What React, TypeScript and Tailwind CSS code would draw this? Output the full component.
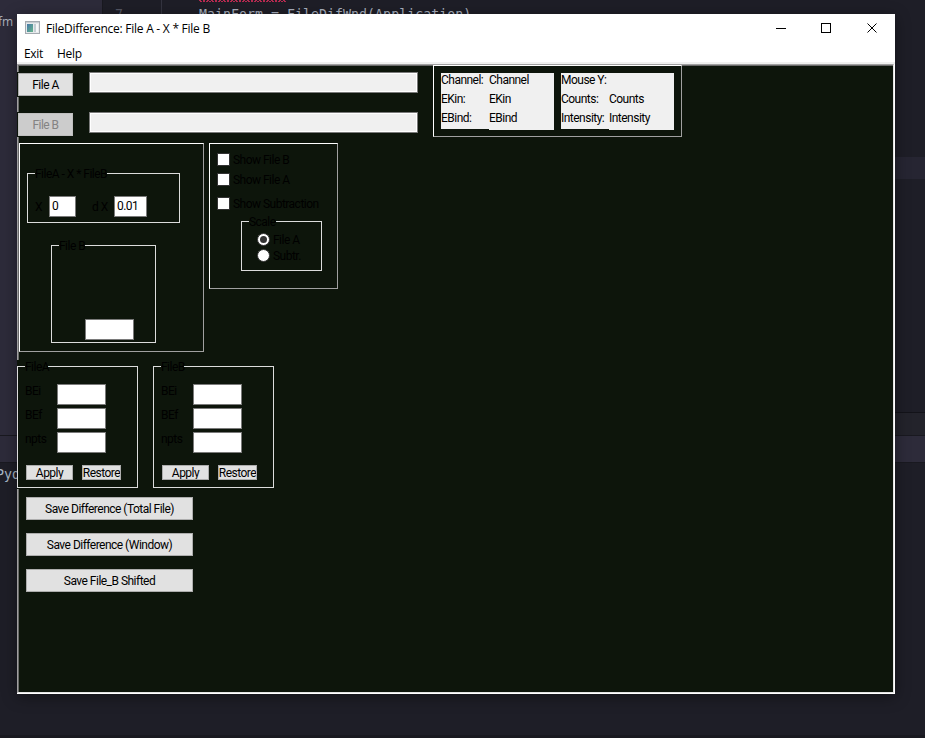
import type { ReactNode } from "react";

const TYPE = "font-['Roboto',sans-serif] text-[12px] leading-[14px] font-normal tracking-[-0.52px] whitespace-nowrap";
const INK = `${TYPE} text-black`;

function Field({ className = "", value = "" }: { className?: string; value?: string }) {
  return (
    <div className={`h-[21px] shrink-0 border border-[#7a7a7a] bg-white pl-[2px] pt-[2px] ${INK} ${className}`}>{value}</div>
  );
}

function PathBar() {
  return (
    <div className="h-[21px] w-[329px] border border-[#7a7a7a] bg-white p-px">
      <div className="h-full bg-[#f0f0f0]" />
    </div>
  );
}

function Button({ children, className = "", disabled = false }: { children: ReactNode; className?: string; disabled?: boolean }) {
  return (
    <button
      disabled={disabled}
      className={`flex shrink-0 items-center justify-center overflow-hidden border ${TYPE} ${disabled ? "border-[#bfbfbf] bg-[#cccccc] text-[#838383]" : "border-[#adadad] bg-[#e1e1e1] text-black"} ${className}`}
    >
      {children}
    </button>
  );
}

function Group({ title, titleClass, className, children }: { title: string; titleClass: string; className: string; children?: ReactNode }) {
  return (
    <div className={`relative shrink-0 border border-[#dcdcdc] ${className}`}>
      <div className={`absolute -top-[7px] left-[7px] bg-[#0d150b] ${INK} ${titleClass}`}>{title}</div>
      {children}
    </div>
  );
}

function Info({ labels, values }: { labels: string[]; values: string[] }) {
  return (
    <div className={`flex w-[113px] items-start ${INK}`}>
      <div className="flex h-[56px] w-[48px] flex-col gap-[5px] bg-[#f0f0f0]">
        {labels.map((t) => <div key={t} className="h-[14px]">{t}</div>)}
      </div>
      <div className="flex h-[57px] flex-1 flex-col gap-[5px] bg-[#f0f0f0]">
        {values.map((t, i) => <div key={i} className="h-[14px]">{t}</div>)}
      </div>
    </div>
  );
}

function Check({ label, className = "" }: { label: string; className?: string }) {
  return (
    <div className={`flex h-[13px] items-center gap-[3px] ${className}`}>
      <div className="size-[13px] shrink-0 border border-[#333333] bg-white" />
      <span className={INK}>{label}</span>
    </div>
  );
}

function Radio({ label, on = false }: { label: string; on?: boolean }) {
  return (
    <div className="flex h-[16px] items-center gap-[3px]">
      <div className="flex size-[13px] items-center justify-center rounded-full border border-[#333333] bg-white">
        {on && <div className="size-[7px] rounded-full bg-[#333333]" />}
      </div>
      <span className={`pt-px ${INK}`}>{label}</span>
    </div>
  );
}

function RangeGroup({ title, titleClass }: { title: string; titleClass: string }) {
  return (
    <Group title={title} titleClass={titleClass} className="h-[122px] w-[121px]">
      <div className="flex flex-col gap-[3px] pl-[7px] pt-[17px]">
        {["BEi", "BEf", "npts"].map((t) => (
          <div key={t} className="flex">
            <span className={`w-[32px] ${INK}`}>{t}</span>
            <Field className="w-[49px]" />
          </div>
        ))}
      </div>
      <div className="mt-[12px] flex gap-[9px] pl-[8px]">
        <Button className="h-[15px] w-[47px] pt-px">Apply</Button>
        <Button className="h-[15px] w-[39px] pt-px">Restore</Button>
      </div>
    </Group>
  );
}

function Editor() {
  return (
    <div className="flex h-full flex-col bg-[#1e1e27] font-['DejaVu_Sans_Mono',monospace] text-[13.3px] leading-[16px] text-[#a9b0bf]">
      <div className="flex h-[435px]">
        <div className="w-[102px] bg-[#2d2b3a] pt-[14px]">
          <div className="-ml-[2px] font-['Open_Sans',sans-serif] text-[12px] text-[#aeb2bd]">fm</div>
        </div>
        <div className="w-[60px] border-x border-[#191920] border-r-[#343440] pl-[12px] pt-[7px] text-[#555764]">7</div>
        <div className="flex flex-1 flex-col">
          <div className="h-[157px] pl-[37px]">
            <svg className="block" width="88" height="2" viewBox="0 0 88 2">
              <path d="M0 0.5H88" stroke="#b52b50" strokeDasharray="2 2" />
              <path d="M1 1.5H88" stroke="#b52b50" strokeDasharray="2 1" />
            </svg>
            <div className="mt-[5px] whitespace-nowrap">MainForm = FileDifWnd(Application)</div>
          </div>
          <div className="h-[22px] bg-[#262532]" />
          <div className="h-[233px]" />
          <div className="h-[23px] border-t border-[#131319] bg-[#23232b]" />
        </div>
      </div>
      <div className="h-[28px] border-y border-[#191920] bg-[#2d2b3a]" />
      <div className="flex-1 pt-[4px]">
        <div className="-ml-[4px] text-[#a9b7c6]">Pyd</div>
      </div>
      <div className="h-[3px] bg-[#191920]" />
    </div>
  );
}

export default function App() {
  return (
    <div className="relative h-[738px] w-[925px] overflow-hidden">
      <Editor />
      <div className="absolute left-[17px] top-[14px] flex h-[680px] w-[878px] flex-col bg-white shadow-[0_3px_14px_rgba(0,0,0,0.4)]">
        <div className="flex h-[29px] items-center font-['Open_Sans',sans-serif] text-[12px] text-black">
          <svg className="-mt-[2px] ml-[8px]" width="16" height="14" viewBox="0 0 16 14">
            <defs>
              <linearGradient id="screen" x1="0" y1="0" x2="1" y2="1">
                <stop offset="0" stopColor="#4778a8" />
                <stop offset="1" stopColor="#65b58b" />
              </linearGradient>
            </defs>
            <rect x="0.5" y="0.5" width="14" height="12" fill="#e6e9eb" stroke="#a4aab0" />
            <rect x="1" y="1" width="13" height="1" fill="#c8cdd2" />
            <rect x="2" y="3" width="6" height="8" fill="url(#screen)" />
            <rect x="9" y="3" width="2" height="8" fill="#c4ced4" />
            <rect x="11" y="3" width="2" height="8" fill="#f6f7f8" />
          </svg>
          <span className="ml-[5px] whitespace-nowrap tracking-[-0.25px]">FileDifference: File A - X * File B</span>
          <svg className="-mt-px ml-auto mr-[17px]" width="102" height="12" viewBox="0 0 102 12" fill="none" stroke="#000" shapeRendering="crispEdges">
            <path d="M0 6.5H10M45.5 1.5H54.5V10.5H45.5Z" />
            <path d="M91.5 1.5L100.5 10.5M100.5 1.5L91.5 10.5" shapeRendering="auto" />
          </svg>
        </div>
        <div className="flex h-[19px] items-center gap-[14px] pl-[7px] pt-[2px] font-['Open_Sans',sans-serif] text-[12px] tracking-[-0.3px] text-black">
          <span>Exit</span>
          <span>Help</span>
        </div>
        <div className="h-[2px] bg-[#f0f0f0]" />
        <div className="flex-1 border-b border-r border-white">
          <div className="h-full border border-b-[#e3e3e3] border-l-[#a0a0a0] border-r-[#e3e3e3] border-t-[#a0a0a0]">
            <div className="h-full border-l border-t border-[#696969] bg-[#0d150b]">
              <div className="flex h-[77px] items-start">
                <div className="-ml-[2px] flex flex-col gap-[15px] pt-[6px]">
                  <div className="bg-[#0d150b] py-px pl-px"><Button className="h-[23px] w-[55px] pt-px">File A</Button></div>
                  <div className="bg-[#0d150b] py-px pl-px"><Button disabled className="h-[23px] w-[55px] pt-px">File B</Button></div>
                </div>
                <div className="ml-[16px] flex flex-col gap-[19px] pt-[6px]">
                  <PathBar />
                  <PathBar />
                </div>
                <div className="-mt-px ml-[15px] flex h-[72px] w-[249px] gap-[7px] border border-b-[#a0a0a0] border-l-white border-r-[#a0a0a0] border-t-white pl-[7px] pt-[7px]">
                  <Info labels={["Channel:", "EKin:", "EBind:"]} values={["Channel", "EKin", "EBind"]} />
                  <Info labels={["Mouse Y:", "Counts:", "Intensity:"]} values={["", "Counts", "Intensity"]} />
                </div>
              </div>
              <div className="flex h-[217px] items-start gap-[5px]">
                <div className="h-[209px] w-[185px] border border-b-[#a0a0a0] border-l-white border-r-[#a0a0a0] border-t-white pl-[7px] pt-[29px]">
                  <Group title="FileA - X * FileB" titleClass="w-[72px]" className="h-[50px] w-[153px]">
                    <div className="flex items-center pl-[7px] pt-[22px]">
                      <span className={`w-[14px] ${INK}`}>X</span>
                      <Field className="w-[27px]" value="0" />
                      <span className={`ml-[16px] w-[22px] ${INK}`}>d X</span>
                      <Field className="w-[33px]" value="0.01" />
                    </div>
                  </Group>
                  <Group title="File B" titleClass="w-[26px]" className="ml-[24px] mt-[22px] h-[98px] w-[105px] pl-[33px] pt-[73px]">
                    <Field className="w-[49px]" />
                  </Group>
                </div>
                <div className="h-[146px] w-[129px] border border-b-[#a0a0a0] border-l-white border-r-[#a0a0a0] border-t-white pl-[7px] pt-[9px]">
                  <Check label="Show File B" />
                  <Check label="Show File A" className="mt-[7px]" />
                  <Check label="Show Subtraction" className="mt-[11px]" />
                  <Group title="Scale" titleClass="w-[27px]" className="ml-[24px] mt-[11px] h-[50px] w-[81px] pl-[15px] pt-[9px]">
                    <Radio label="File A" on />
                    <Radio label="Subtr." />
                  </Group>
                </div>
              </div>
              <div className="-ml-[2px] flex h-[129px] gap-[15px] bg-[#0d150b] pt-[6px]">
                <RangeGroup title="FileA" titleClass="w-[23px]" />
                <RangeGroup title="FileB" titleClass="w-[23px]" />
              </div>
              <div className="flex flex-col gap-[13px] pl-[7px] pt-[8px]">
                <Button className="h-[23px] w-[167px] pt-px">Save Difference (Total File)</Button>
                <Button className="h-[23px] w-[167px] pt-px">Save Difference (Window)</Button>
                <Button className="h-[23px] w-[167px] pt-px">Save File_B Shifted</Button>
              </div>
            </div>
          </div>
        </div>
      </div>
    </div>
  );
}
